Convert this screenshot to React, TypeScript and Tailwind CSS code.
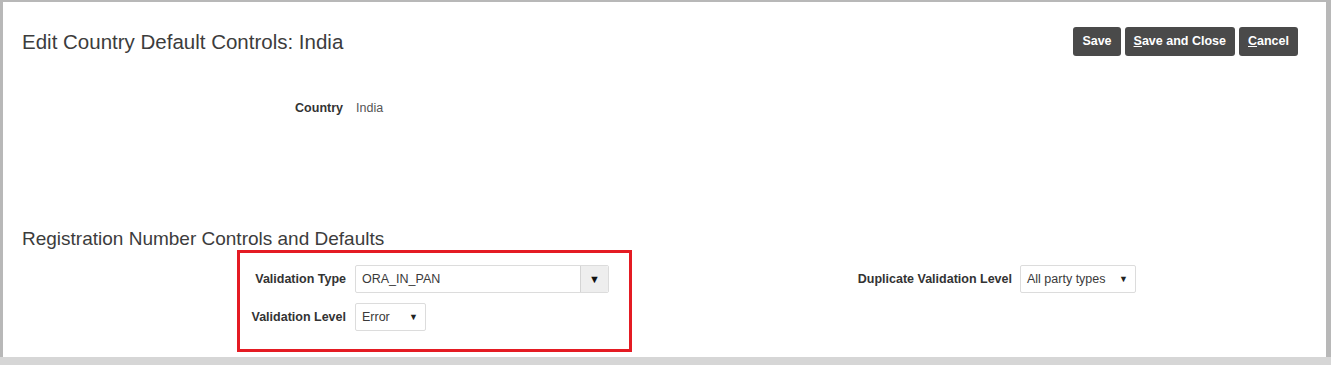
import React from "react";

// Oracle-style "Edit Country Default Controls" page, framed by the grey
// screenshot border with the red annotation box around the left fields.

const FONT = { fontFamily: '"Liberation Sans", Arial, sans-serif' };

function ActionButton({
  children,
}: {
  children: React.ReactNode;
}) {
  return (
    <button
      type="button"
      className="h-[29px] rounded-[3px] bg-[#4a4a4a] px-[9px] text-[12.5px] font-bold text-white"
    >
      {children}
    </button>
  );
}

function Caret() {
  return <span className="text-[9px] leading-none text-[#222]">▼</span>;
}

function SelectBox({ value, width }: { value: string; width: string }) {
  return (
    <div
      className={`flex h-[28px] items-center justify-between rounded-[2px] border border-[#dcdcdc] bg-white pl-[6px] pr-[7px] text-[12.5px] text-[#3a3a3a] ${width}`}
    >
      <span>{value}</span>
      <Caret />
    </div>
  );
}

function Combo({ value }: { value: string }) {
  return (
    <div className="flex h-[28px] w-[254px] rounded-[2px] border border-[#dcdcdc] bg-white">
      <div className="flex flex-1 items-center pl-[6px] text-[12.5px] text-[#3a3a3a]">
        {value}
      </div>
      <div className="flex w-[28px] items-center justify-center rounded-r-[2px] border-l border-[#d4d4d4] bg-[#eeeeee]">
        <span className="text-[11px] leading-none text-[#111]">▼</span>
      </div>
    </div>
  );
}

export default function App() {
  return (
    <div className="flex h-[365px] w-[1331px] flex-col bg-[#b8b8b8]" style={FONT}>
      <div className="ml-[3px] mr-[5px] mt-[2px] flex h-[355px] flex-col bg-white">
        {/* Header */}
        <div className="flex items-start justify-between pl-[19px] pr-[28px] pt-[25px]">
          <h1 className="mt-[3px] text-[20.5px] leading-[24px] font-normal text-[#3c3c3c]">
            Edit Country Default Controls: India
          </h1>
          <div className="flex gap-[4px]">
            <ActionButton>Save</ActionButton>
            <ActionButton>
              <span className="underline">S</span>ave and Close
            </ActionButton>
            <ActionButton>
              <span className="underline">C</span>ancel
            </ActionButton>
          </div>
        </div>

        {/* Country */}
        <div className="mt-[42px] flex h-[20px] items-center text-[12.5px]">
          <div className="w-[340px] text-right font-bold text-[#333]">Country</div>
          <div className="ml-[13px] text-[#555]">India</div>
        </div>

        {/* Section */}
        <h2 className="ml-[19px] mt-[110px] text-[19px] leading-[22px] font-normal text-[#3c3c3c]">
          Registration Number Controls and Defaults
        </h2>

        <div className="flex items-start">
          <div className="ml-[234px] flex h-[102px] w-[395px] flex-col gap-[10px] border-[3px] border-[#e41b23] pt-[12px]">
            <div className="flex items-center">
              <div className="w-[106px] text-right text-[12.5px] font-bold text-[#333]">
                Validation Type
              </div>
              <div className="ml-[9px]">
                <Combo value="ORA_IN_PAN" />
              </div>
            </div>
            <div className="flex items-center">
              <div className="w-[106px] text-right text-[12.5px] font-bold text-[#333]">
                Validation Level
              </div>
              <div className="ml-[9px]">
                <SelectBox value="Error" width="w-[71px]" />
              </div>
            </div>
          </div>

          <div className="ml-[208px] flex items-center pt-[15px]">
            <div className="w-[172px] text-right text-[12.5px] font-bold text-[#333]">
              Duplicate Validation Level
            </div>
            <div className="ml-[8px]">
              <SelectBox value="All party types" width="w-[116px]" />
            </div>
          </div>
        </div>
      </div>
      <div className="mt-auto h-[8px] bg-[#d6d6d6]" />
    </div>
  );
}
